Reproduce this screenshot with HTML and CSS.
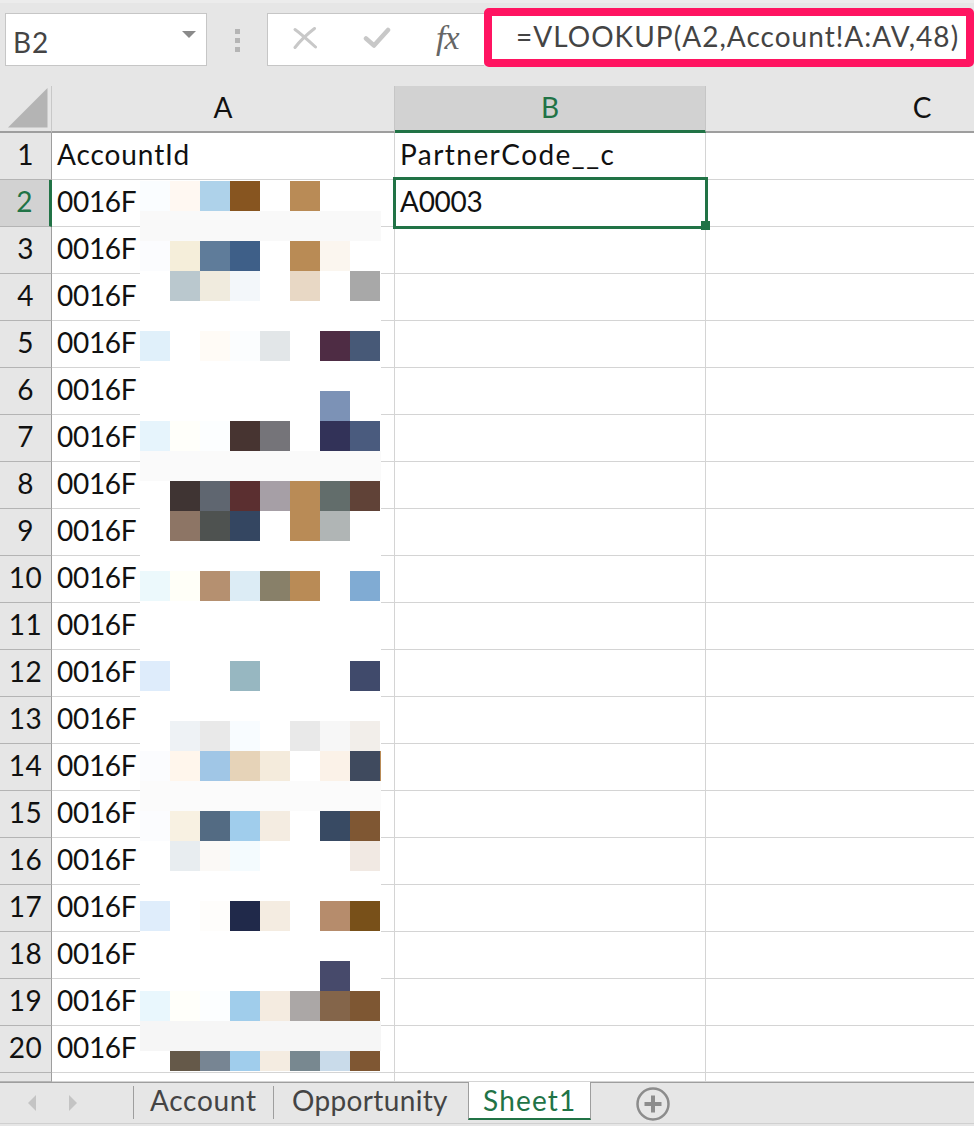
FILE: index.html
```html
<!DOCTYPE html>
<html lang="ja">
<head>
<meta charset="utf-8">
<title>Sheet1</title>
<link rel="stylesheet" href="styles.css">
</head>
<body>
<div class="app">
  <header class="toolbar">
    <div class="namebox"><span class="nameref">B2</span><span class="caret"></span></div>
    <div class="grip"><i></i><i></i><i></i></div>
    <div class="fxbox">
      <svg class="ico-x" width="24" height="22" viewBox="0 0 24 22"><path d="M2 2.500C7 6 17 15 22.500 20M21.500 1.500C15 6.500 7 14 2 20.500" fill="none" stroke="#c8c8c8" stroke-width="3" stroke-linecap="round"/></svg>
      <svg class="ico-check" width="28" height="22" viewBox="0 0 28 22"><path d="M3 11.500L11 18.500L25 3" fill="none" stroke="#c8c8c8" stroke-width="4.500" stroke-linecap="round" stroke-linejoin="round"/></svg>
      <span class="fx">fx</span>
    </div>
    <div class="formula">=VLOOKUP(A2,Account!A:AV,48)</div>
  </header>
  <main class="sheet">
    <div class="row head">
      <div class="rh corner"><svg width="40" height="40" viewBox="0 0 40 40"><path d="M0 39.500L39.500 0V39.500Z" fill="#b4b4b4"/></svg></div>
      <div class="ch a">A</div><div class="ch b on">B</div><div class="ch c">C</div>
    </div>
    <div class="row r1"><div class="rh">1</div><div class="cell a">AccountId</div><div class="cell b">PartnerCode__c</div><div class="cell c"></div></div>
    <div class="row"><div class="rh on">2</div><div class="cell a">0016F</div><div class="cell b">A0003</div><div class="cell c"></div></div>
    <div class="row"><div class="rh">3</div><div class="cell a">0016F</div><div class="cell b"></div><div class="cell c"></div></div>
    <div class="row"><div class="rh">4</div><div class="cell a">0016F</div><div class="cell b"></div><div class="cell c"></div></div>
    <div class="row"><div class="rh">5</div><div class="cell a">0016F</div><div class="cell b"></div><div class="cell c"></div></div>
    <div class="row"><div class="rh">6</div><div class="cell a">0016F</div><div class="cell b"></div><div class="cell c"></div></div>
    <div class="row"><div class="rh">7</div><div class="cell a">0016F</div><div class="cell b"></div><div class="cell c"></div></div>
    <div class="row"><div class="rh">8</div><div class="cell a">0016F</div><div class="cell b"></div><div class="cell c"></div></div>
    <div class="row"><div class="rh">9</div><div class="cell a">0016F</div><div class="cell b"></div><div class="cell c"></div></div>
    <div class="row"><div class="rh">10</div><div class="cell a">0016F</div><div class="cell b"></div><div class="cell c"></div></div>
    <div class="row"><div class="rh">11</div><div class="cell a">0016F</div><div class="cell b"></div><div class="cell c"></div></div>
    <div class="row"><div class="rh">12</div><div class="cell a">0016F</div><div class="cell b"></div><div class="cell c"></div></div>
    <div class="row"><div class="rh">13</div><div class="cell a">0016F</div><div class="cell b"></div><div class="cell c"></div></div>
    <div class="row"><div class="rh">14</div><div class="cell a">0016F</div><div class="cell b"></div><div class="cell c"></div></div>
    <div class="row"><div class="rh">15</div><div class="cell a">0016F</div><div class="cell b"></div><div class="cell c"></div></div>
    <div class="row"><div class="rh">16</div><div class="cell a">0016F</div><div class="cell b"></div><div class="cell c"></div></div>
    <div class="row"><div class="rh">17</div><div class="cell a">0016F</div><div class="cell b"></div><div class="cell c"></div></div>
    <div class="row"><div class="rh">18</div><div class="cell a">0016F</div><div class="cell b"></div><div class="cell c"></div></div>
    <div class="row"><div class="rh">19</div><div class="cell a">0016F</div><div class="cell b"></div><div class="cell c"></div></div>
    <div class="row"><div class="rh">20</div><div class="cell a">0016F</div><div class="cell b"></div><div class="cell c"></div></div>
    <div class="row stub"><div class="rh"></div><div class="cell a"></div><div class="cell b"></div><div class="cell c"></div></div>

    <div class="selection"><span class="handle"></span></div>

    <div class="mosaic">
      <div class="m"><i style="background:#fafdff"></i><i style="background:#fff8f2"></i><i style="background:#aed2ea"></i><i style="background:#875520"></i><i></i><i style="background:#b98b56"></i></div>
      <div class="m bar" style="background:#f9f9f9"></div>
      <div class="m"><i style="background:#fbfcfe"></i><i style="background:#f5eeda"></i><i style="background:#5f7c9a"></i><i style="background:#3e5f88"></i><i></i><i style="background:#b98b55"></i><i style="background:#fbf6ef"></i></div>
      <div class="m"><i></i><i style="background:#bac8ce"></i><i style="background:#f0ebde"></i><i style="background:#f3f7fa"></i><i></i><i style="background:#e8d8c5"></i><i></i><i style="background:#a8a8a8"></i></div>
      <div class="m"></div>
      <div class="m"><i style="background:#e0f0fa"></i><i></i><i style="background:#fffbf6"></i><i style="background:#fbfdfe"></i><i style="background:#e2e6e8"></i><i></i><i style="background:#4e2c44"></i><i style="background:#475977"></i></div>
      <div class="m"></div>
      <div class="m"><i></i><i></i><i></i><i></i><i></i><i></i><i style="background:#7c92b6"></i></div>
      <div class="m"><i style="background:#e6f4fc"></i><i style="background:#fffffa"></i><i style="background:#fcfeff"></i><i style="background:#473431"></i><i style="background:#757479"></i><i></i><i style="background:#323258"></i><i style="background:#4a5b7e"></i></div>
      <div class="m bar" style="background:#fafafa"></div>
      <div class="m"><i></i><i style="background:#3f3433"></i><i style="background:#5f6670"></i><i style="background:#5b2f30"></i><i style="background:#a69fa6"></i><i style="background:#b98b56"></i><i style="background:#626d6b"></i><i style="background:#604237"></i></div>
      <div class="m"><i></i><i style="background:#8d7565"></i><i style="background:#4e5250"></i><i style="background:#344661"></i><i></i><i style="background:#b98b56"></i><i style="background:#b0b5b5"></i></div>
      <div class="m"></div>
      <div class="m"><i style="background:#ecf9fc"></i><i style="background:#fffff8"></i><i style="background:#b59070"></i><i style="background:#dcecf5"></i><i style="background:#888069"></i><i style="background:#b98b56"></i><i></i><i style="background:#80abd3"></i></div>
      <div class="m"></div>
      <div class="m"></div>
      <div class="m"><i style="background:#deecfb"></i><i></i><i></i><i style="background:#97b7c1"></i><i></i><i></i><i></i><i style="background:#404a6b"></i></div>
      <div class="m"></div>
      <div class="m"><i></i><i style="background:#eef2f5"></i><i style="background:#e9e9e9"></i><i style="background:#f8fcff"></i><i></i><i style="background:#e9e9e9"></i><i style="background:#f7f7f7"></i><i style="background:#f2eeea"></i></div>
      <div class="m"><i style="background:#fbfcfe"></i><i style="background:#fff6ec"></i><i style="background:#a0c6e6"></i><i style="background:#e6d3b8"></i><i style="background:#f4ebdc"></i><i></i><i style="background:#fbf2e8"></i><i style="background:#3f4a5e"></i><i class="sliver"></i></div>
      <div class="m bar" style="background:#fbfbfb"></div>
      <div class="m"><i style="background:#fbfcfe"></i><i style="background:#f8f1e2"></i><i style="background:#536b83"></i><i style="background:#a0cdec"></i><i style="background:#f4ece1"></i><i></i><i style="background:#384a63"></i><i style="background:#7f5733"></i></div>
      <div class="m"><i></i><i style="background:#e8edf0"></i><i style="background:#fbf9f6"></i><i style="background:#f4fbfe"></i><i></i><i></i><i></i><i style="background:#f1e9e3"></i></div>
      <div class="m"></div>
      <div class="m"><i style="background:#dfedfb"></i><i></i><i style="background:#fefdfb"></i><i style="background:#20294a"></i><i style="background:#f4ece1"></i><i></i><i style="background:#b68c6c"></i><i style="background:#785019"></i></div>
      <div class="m"></div>
      <div class="m"><i></i><i></i><i></i><i></i><i></i><i></i><i style="background:#474a6b"></i></div>
      <div class="m"><i style="background:#e9f7fd"></i><i style="background:#fffffa"></i><i style="background:#fcfeff"></i><i style="background:#a0cdeb"></i><i style="background:#f4ebe0"></i><i style="background:#aba7a6"></i><i style="background:#84654a"></i><i style="background:#7e5733"></i></div>
      <div class="m bar" style="background:#f6f6f6"></div>
      <div class="m last"><i></i><i style="background:#655949"></i><i style="background:#778593"></i><i style="background:#a0cdec"></i><i style="background:#f4ece1"></i><i style="background:#788890"></i><i style="background:#c9dbea"></i><i style="background:#7f5733"></i></div>
    </div>
  </main>
  <footer class="tabbar">
    <div class="nav"><span class="tri left"></span><span class="tri right"></span></div>
    <div class="tab first">Account</div>
    <div class="tab second">Opportunity</div>
    <div class="tab active">Sheet1</div>
    <svg class="add" width="34" height="34" viewBox="0 0 34 34"><circle cx="17" cy="17" r="15.500" fill="none" stroke="#8c8c8c" stroke-width="2.500"/><path d="M17 8.500V25.500M8.500 17H25.500" stroke="#8c8c8c" stroke-width="4"/></svg>
  </footer>
</div>
</body>
</html>
```
FILE: styles.css
```css
* { box-sizing: border-box; }
html, body { margin: 0; padding: 0; }
body { width: 974px; height: 1126px; overflow: hidden; background: #e6e6e6; }
.app {
  width: 974px; height: 1126px; display: flex; flex-direction: column;
  font-family: Lato, "Noto Sans CJK JP", sans-serif;
  font-size: 28px; letter-spacing: 1px; color: #111; overflow: hidden;
}

/* formula bar */
.toolbar {
  height: 86px; flex: none; display: flex; align-items: flex-start;
  background: #e6e6e6; border-top: 3px solid #ececec; padding: 10px 0 0 5px;
}
.namebox {
  width: 202px; height: 53px; background: #fff; border: 1px solid #c6c6c6;
  display: flex; align-items: center; justify-content: space-between; padding: 5px 10px 0 7px;
  color: #444;
}
.caret {
  width: 0; height: 0; margin-top: -15px;
  border-left: 7px solid transparent; border-right: 7px solid transparent; border-top: 7px solid #8a8a8a;
}
.grip { width: 60px; height: 53px; display: flex; flex-direction: column; align-items: center; gap: 4px; padding-top: 16px; }
.grip i { display: block; width: 5px; height: 5px; background: #b5b5b5; }
.fxbox {
  width: 217px; height: 53px; background: #fff; border: 1px solid #c6c6c6; border-right: 0;
  display: flex; align-items: center; padding-left: 25px; position: relative;
}
.ico-x { margin-top: -3px; }
.ico-check { margin: -3px 0 0 46px; }
.fx {
  margin: -4px 0 0 45px; font-family: "Liberation Serif", serif; font-style: italic;
  font-size: 34px; color: #666; letter-spacing: -1px;
}
.formula {
  width: 490px; height: 59px; margin-top: -5px; border: 8px solid #ff1461; border-radius: 5px;
  background: #fff; color: #444; padding-left: 24px; letter-spacing: 1.03px; line-height: 41px; white-space: nowrap;
}

/* sheet */
.sheet { position: relative; height: 996px; flex: none; background: #fff; overflow: hidden; }
.row { display: flex; height: 47px; }
.row.stub { height: 9px; }
.rh {
  width: 52px; flex: none; background: #e6e6e6; border-right: 1px solid #9e9e9e; border-bottom: 1px solid #b4b4b4;
  display: flex; align-items: center; justify-content: center; padding-bottom: 5px; letter-spacing: 0.5px;
}
.rh.on { background: #d2d2d2; color: #217346; border-right: 3px solid #217346; }
.corner { align-items: flex-end; justify-content: flex-end; padding: 0 3px 3px 0; border-right-color: #c8c8c8; border-bottom: 2px solid #9e9e9e; }
.corner svg { display: block; }
.ch {
  flex: none; height: 47px; background: #e6e6e6; border-bottom: 2px solid #9e9e9e; border-right: 1px solid #c6c6c6;
  display: flex; align-items: center; justify-content: center; padding-bottom: 3px; letter-spacing: 0;
}
.ch.on { background: #d2d2d2; color: #217346; border-bottom: 3px solid #217346; }
.a { width: 343px; }
.b { width: 311px; }
.c { width: 432px; }
.cell {
  flex: none; border-right: 1px solid #d4d4d4; border-bottom: 1px solid #d4d4d4;
  padding: 0 0 5px 5px; display: flex; align-items: center; white-space: nowrap; overflow: hidden; letter-spacing: -0.3px;
}
.r1 .cell.a { letter-spacing: 0.9px; }
.r1 .cell.b { letter-spacing: 1.45px; }
.ch.c, .cell.c { border-right: 0; }
.selection { position: absolute; left: 393px; top: 91px; width: 315px; height: 52px; border: 3px solid #217346; }
.handle { position: absolute; right: -5px; bottom: -4px; width: 9px; height: 9px; background: #217346; }

/* redaction mosaic */
.mosaic { position: absolute; left: 140px; top: 95px; width: 241px; height: 890px; background: #fff; }
.m { display: flex; height: 30px; }
.m.last { height: 20px; }
.m i { display: block; width: 30px; height: 100%; }
.m i.sliver { width: 1px; background: #b98b56; }

/* sheet tabs */
.tabbar {
  flex: 1; position: relative; display: flex; align-items: flex-start;
  background: #e6e6e6; border-top: 1px solid #9e9e9e; border-bottom: 1px solid #d0d0d0; margin-bottom: 2px; color: #444;
}
.nav { width: 134px; height: 33px; margin-top: 3px; flex: none; border-right: 1px solid #9e9e9e; display: flex; align-items: center; padding-left: 28px; gap: 33px; }
.tri { width: 0; height: 0; border-top: 8px solid transparent; border-bottom: 8px solid transparent; }
.tri.left { border-right: 8px solid #c4c4c4; }
.tri.right { border-left: 8px solid #c4c4c4; }
.tab { height: 33px; line-height: 29px; white-space: nowrap; }
.tab.first { width: 140px; padding-left: 16px; margin-top: 3px; border-right: 1px solid #9e9e9e; letter-spacing: 0.7px; }
.tab.second { width: 194px; padding-left: 18px; margin-top: 3px; letter-spacing: 0.35px; }
.tab.active {
  width: 123px; height: 38px; margin-top: -1px; padding: 4px 0 0 14px; background: #fff; color: #217346; letter-spacing: 1.2px;
  border-left: 1px solid #9e9e9e; border-right: 1px solid #9e9e9e; border-bottom: 2px solid #217346;
}
.add { margin: 4px 0 0 45px; flex: none; }
```
